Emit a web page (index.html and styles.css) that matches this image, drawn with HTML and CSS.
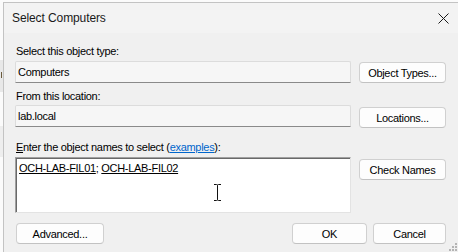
FILE: index.html
```html
<!DOCTYPE html>
<html>
<head>
<meta charset="utf-8">
<title>Select Computers</title>
<link rel="stylesheet" href="styles.css">
</head>
<body>
<div class="desk">
  <div class="edge">
    <div class="band b1"><span class="mark"></span></div>
    <div class="band b2"></div>
  </div>
  <div class="window">
    <div class="titlebar">
      <span class="title">Select Computers</span>
      <svg class="close" width="11" height="11" viewBox="0 0 11 11"><path d="M0.5 0.5L10.5 10.5M10.5 0.5L0.5 10.5" stroke="#1a1a1a" stroke-width="1" fill="none"/></svg>
    </div>
    <div class="content">
      <div class="grid">
        <div class="lbl l1">Select this object type:</div>
        <div class="field f1">Computers</div>
        <button class="btn b-types">Object Types...</button>
        <div class="lbl l2">From this location:</div>
        <div class="field f2">lab.local</div>
        <button class="btn b-loc">Locations...</button>
        <div class="lbl l3"><u>E</u>nter the object names to select (<a class="link">examples</a>):</div>
        <div class="names"><span class="nm">OCH-LAB-FIL01</span>; <span class="nm">OCH-LAB-FIL02</span>
          <svg class="ibeam" width="9" height="17" viewBox="0 0 9 17"><path d="M1 0.5H3.5Q4.5 0.5 4.5 1.5V15.5Q4.5 16.5 3.5 16.5H1M8 0.5H5.5Q4.5 0.5 4.5 1.5M4.5 15.5Q4.5 16.5 5.5 16.5H8" stroke="#111" stroke-width="1" fill="none"/></svg>
        </div>
        <button class="btn b-check">Check Names</button>
      </div>
      <div class="actions">
        <button class="btn adv">Advanced...</button>
        <div class="spacer"></div>
        <button class="btn ok">OK</button>
        <button class="btn cancel">Cancel</button>
      </div>
      <svg class="grip" width="9" height="8" viewBox="0 0 9 8"><g fill="#b4b4b4"><rect x="7" y="0" width="2" height="2"/><rect x="4" y="3" width="2" height="2"/><rect x="7" y="3" width="2" height="2"/><rect x="1" y="6" width="2" height="2"/><rect x="4" y="6" width="2" height="2"/><rect x="7" y="6" width="2" height="2"/></g></svg>
    </div>
  </div>
</div>
</body>
</html>
```
FILE: styles.css
```css
html, body {
  margin: 0;
  padding: 0;
}
body {
  width: 458px;
  height: 252px;
  overflow: hidden;
  background: #fbfbfb;
  font-family: "Liberation Sans", Arial, sans-serif;
  color: #000;
}
.desk {
  display: flex;
  height: 252px;
}
.edge {
  width: 3px;
  flex: none;
  display: flex;
  flex-direction: column;
}
.band {
  background: #e8e8e8;
  position: relative;
}
.b1 {
  margin-top: 60px;
  height: 32px;
}
.b2 {
  margin-top: 34px;
  height: 31px;
  background: #eeeeee;
}
.mark {
  position: absolute;
  left: 1px;
  top: 12px;
  width: 1px;
  height: 6px;
  background: #6a5a3a;
}
.window {
  flex: 1;
  margin-top: 2px;
  border-top: 1px solid #c3c3c3;
  border-left: 1px solid #c3c3c3;
  background: #f0f0f0;
  display: flex;
  flex-direction: column;
}
.titlebar {
  height: 30px;
  flex: none;
  background: #f3f3f3;
  display: flex;
  align-items: center;
  justify-content: space-between;
  padding-left: 8px;
  padding-right: 9px;
}
.title {
  font-size: 12px;
  line-height: 15px;
  letter-spacing: -0.1px;
  color: #1a1a1a;
}
.close {
  display: block;
  margin-top: 0px;
}
.content {
  flex: 1;
  position: relative;
  padding-left: 11px;
  padding-right: 12px;
  font-size: 11px;
  letter-spacing: -0.3px;
}
.grid {
  display: grid;
  grid-template-columns: 336px 87px;
  column-gap: 8px;
  padding-top: 12px;
}
.lbl {
  grid-column: 1 / -1;
  height: 13px;
  line-height: 13px;
  padding-left: 1px;
}
.l2 { margin-top: 7px; }
.l3 { margin-top: 13px; }
.link {
  color: #0066cc;
  text-decoration: underline;
}
.field {
  box-sizing: border-box;
  height: 22px;
  line-height: 13px;
  padding: 4px 2px 0;
  background: #f6f6f6;
  border: 1px solid #dcdcdc;
  border-bottom-color: #8a8a8a;
  border-radius: 2px 2px 0 0;
}
.f1 { margin-top: 3px; }
.f2 { margin-top: 2px; }
.names {
  position: relative;
  box-sizing: border-box;
  margin-top: 3px;
  height: 56px;
  background: #ffffff;
  border-top: 1px solid #a0a0a0;
  border-left: 1px solid #a0a0a0;
  border-right: 1px solid #e3e3e3;
  border-bottom: 1px solid #e3e3e3;
  box-shadow: inset 1px 1px 0 #696969;
  padding: 4px 3px 0;
  line-height: 13px;
}
.nm {
  text-decoration: underline;
}
.ibeam {
  position: absolute;
  left: 197px;
  top: 26px;
}
.btn {
  box-sizing: border-box;
  height: 21px;
  padding: 0;
  margin: 0;
  font-family: inherit;
  font-size: 11px;
  letter-spacing: -0.3px;
  color: #000;
  background: #fdfdfd;
  border: 1px solid #d0d0d0;
  border-bottom-color: #c2c2c2;
  border-radius: 4px;
  align-self: start;
}
.b-types { margin-top: 4px; }
.b-loc { margin-top: 4px; }
.b-check { margin-top: 5px; }
.actions {
  display: flex;
  margin-top: 10px;
  padding-left: 1px;
}
.spacer { flex: 1; }
.adv { width: 88px; }
.ok { width: 75px; margin-right: 6px; }
.cancel { width: 73px; }
.grip {
  position: absolute;
  right: 1px;
  top: 210px;
}
```
